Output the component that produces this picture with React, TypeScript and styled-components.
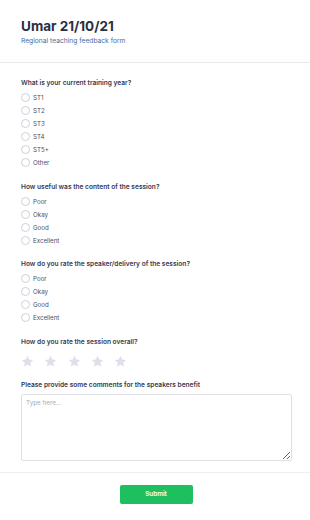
import React, { useState } from 'react';
import styled, { createGlobalStyle } from 'styled-components';

const GlobalStyle = createGlobalStyle`
  html, body {
    margin: 0;
    padding: 0;
    background: #ffffff;
  }
  body {
    font-family: Inter, "Liberation Sans", sans-serif;
    color: #2f3447;
  }
`

const Page = styled.div`
  width: 310px;
  min-height: 520px;
  display: flex;
  flex-direction: column;
`

const Header = styled.header`
  padding: 17px 18px 16px 21px;
  border-bottom: 1px solid #e8e9ee;
`

const Title = styled.h1`
  margin: 0;
  font-size: 13.5px;
  line-height: 18px;
  font-weight: 700;
  color: #2b2f42;
`

const Subtitle = styled.div`
  margin-top: 1px;
  font-size: 6.7px;
  line-height: 10px;
  color: #4e6a9a;
`

const Body = styled.div`
  padding: 15px 18px 11px 21px;
  display: flex;
  flex-direction: column;
  gap: 12.5px;
  border-bottom: 1px solid #eeeff2;
`

const Question = styled.section`
  display: flex;
  flex-direction: column;
`

const Label = styled.div`
  font-size: 6.6px;
  line-height: 10px;
  font-weight: 600;
  color: #363a4f;
  margin-bottom: 3px;
`

const OptionRow = styled.label`
  display: flex;
  align-items: center;
  gap: 3px;
  height: 13px;
  font-size: 6.2px;
  color: #4a4f63;
  cursor: pointer;
`

const Dot = styled.span<{ $on: boolean }>`
  width: 7px;
  height: 7px;
  border-radius: 50%;
  border: 1px solid ${p => (p.$on ? '#1dbf5e' : '#cdd0d8')};
  background: ${p => (p.$on ? '#1dbf5e' : '#fff')};
  box-sizing: content-box;
`

const Stars = styled.div`
  display: flex;
  gap: 10.3px;
  padding: 2.5px 0 2px;
`

const StarBtn = styled.span`
  display: block;
  width: 13px;
  height: 13px;
  cursor: pointer;
`

const TextArea = styled.textarea`
  display: block;
  box-sizing: border-box;
  width: 271px;
  height: 67px;
  margin-top: 1px;
  padding: 4px 4px;
  border: 1px solid #dfe1e6;
  border-radius: 2px;
  font-family: Inter, "Liberation Sans", sans-serif;
  font-size: 6.3px;
  color: #333;
  resize: vertical;
  outline: none;
  &::placeholder {
    color: #a6abb8;
  }
`

const Footer = styled.footer`
  display: flex;
  justify-content: center;
  padding: 12px 0 17px;
`

const Submit = styled.button`
  width: 73px;
  height: 19px;
  margin-left: 2px;
  border: none;
  border-radius: 2px;
  background: #1dbf5e;
  color: #fff;
  font-family: Inter, "Liberation Sans", sans-serif;
  font-size: 6.4px;
  font-weight: 600;
  cursor: pointer;
`

function Star(props: { filled: boolean }) {
  return (
    <svg width="13" height="13" viewBox="0 0 24 24">
      <path
        d="M12 1.5l3.2 6.7 7.3.9-5.4 5 1.4 7.3L12 17.8l-6.5 3.6 1.4-7.3-5.4-5 7.3-.9z"
        fill={props.filled ? '#f5b301' : '#dde0ea'}
      />
    </svg>
  )
}

function RadioGroup(props: {
  label: string
  options: string[]
  value: string
  onChange(v: string): void
}) {
  const { label, options, value, onChange } = props
  return (
    <Question>
      <Label>{label}</Label>
      {options.map(o => (
        <OptionRow key={o} onClick={() => onChange(o)}>
          <Dot $on={value === o} />
          {o}
        </OptionRow>
      ))}
    </Question>
  )
}

const YEARS = ['ST1', 'ST2', 'ST3', 'ST4', 'ST5+', 'Other']
const RATINGS = ['Poor', 'Okay', 'Good', 'Excellent']

export default function App() {
  const [year, setYear] = useState('')
  const [useful, setUseful] = useState('')
  const [speaker, setSpeaker] = useState('')
  const [stars, setStars] = useState(0)

  return (
    <Page>
      <GlobalStyle />
      <Header>
        <Title>Umar 21/10/21</Title>
        <Subtitle>Regional teaching feedback form</Subtitle>
      </Header>
      <Body>
        <RadioGroup
          label='What is your current training year?'
          options={YEARS}
          value={year}
          onChange={setYear}
        />
        <RadioGroup
          label='How useful was the content of the session?'
          options={RATINGS}
          value={useful}
          onChange={setUseful}
        />
        <RadioGroup
          label='How do you rate the speaker/delivery of the session?'
          options={RATINGS}
          value={speaker}
          onChange={setSpeaker}
        />
        <Question>
          <Label>How do you rate the session overall?</Label>
          <Stars>
            {[1, 2, 3, 4, 5].map(n => (
              <StarBtn key={n} onClick={() => setStars(n)}>
                <Star filled={n <= stars} />
              </StarBtn>
            ))}
          </Stars>
        </Question>
        <Question>
          <Label>Please provide some comments for the speakers benefit</Label>
          <TextArea placeholder='Type here...' />
        </Question>
      </Body>
      <Footer>
        <Submit>Submit</Submit>
      </Footer>
    </Page>
  )
}
